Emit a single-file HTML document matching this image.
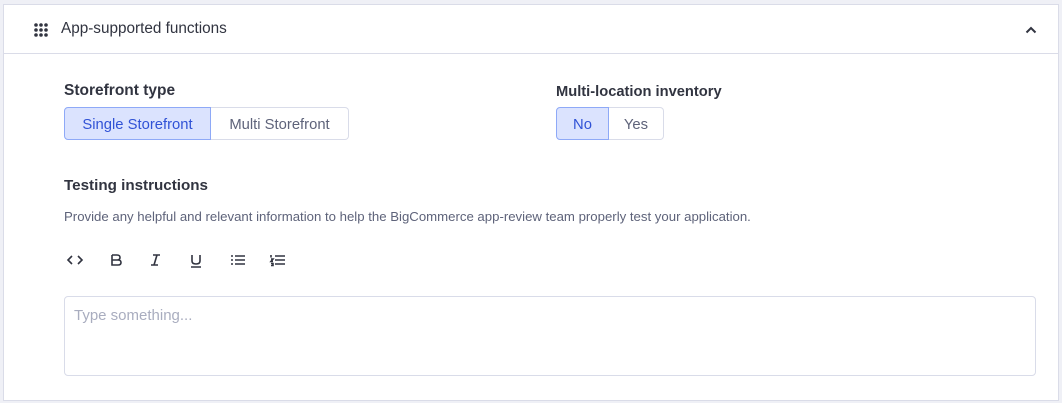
<!DOCTYPE html>
<html><head><style>
*{box-sizing:border-box;margin:0;padding:0}
body{width:1062px;height:403px;background:#eff0f6;font-family:"Liberation Sans",sans-serif;position:relative;overflow:hidden;color:#313440}
.panel{position:absolute;left:3px;top:4px;width:1056px;height:397px;background:#fff;border:1px solid #dadce8}
.hdr{position:absolute;left:0;top:0;width:100%;height:49px;border-bottom:1px solid #dadce8}
.abs{position:absolute;white-space:nowrap}
.lbl{font-weight:bold;font-size:14.7px;color:#313440}
.seg{position:absolute;display:flex;height:33px;top:102px}
.seg div{border:1px solid #d9dce9;font-size:14.8px;color:#5e637a;display:flex;align-items:center;justify-content:center;height:33px;padding-top:2px}
.seg .on{background:#dbe3fe;border-color:#8ea9f7;color:#3052d6}
.seg div:first-child{border-radius:4px 0 0 4px}
.seg div:last-child{border-radius:0 4px 4px 0;border-left:none}
</style></head><body>
<div class="panel">
 <div class="hdr">
  <svg class="abs" style="left:30px;top:18px" width="14" height="14" viewBox="0 0 14 14" fill="#313440">
   <circle cx="2" cy="2" r="1.8"/><circle cx="7" cy="2" r="1.8"/><circle cx="12" cy="2" r="1.8"/>
   <circle cx="2" cy="7" r="1.8"/><circle cx="7" cy="7" r="1.8"/><circle cx="12" cy="7" r="1.8"/>
   <circle cx="2" cy="12" r="1.8"/><circle cx="7" cy="12" r="1.8"/><circle cx="12" cy="12" r="1.8"/>
  </svg>
  <div class="abs" style="left:57px;top:15px;font-size:15.3px;color:#313440">App-supported functions</div>
  <svg class="abs" style="left:1021px;top:21px" width="12" height="8" viewBox="0 0 12 8"><path d="M1.5 6.5 L6 2 L10.5 6.5" stroke="#313440" stroke-width="2" fill="none"/></svg>
 </div>
 <div class="abs lbl" style="left:60px;top:77px;font-size:15.5px">Storefront type</div>
 <div class="seg" style="left:60px"><div class="on" style="width:147px">Single Storefront</div><div style="width:138px">Multi Storefront</div></div>
 <div class="abs lbl" style="left:552px;top:79px">Multi-location inventory</div>
 <div class="seg" style="left:552px"><div class="on" style="width:53px">No</div><div style="width:55px">Yes</div></div>
 <div class="abs lbl" style="left:60px;top:172px;font-size:15.2px">Testing instructions</div>
 <div class="abs" style="left:60px;top:204px;font-size:13.2px;color:#5e637a">Provide any helpful and relevant information to help the BigCommerce app-review team properly test your application.</div>
 <svg class="abs" style="left:60px;top:247px" width="230" height="16" viewBox="0 0 230 16" fill="none" stroke="#313440" stroke-width="1.6">
  <path d="M8 4 L4 8 L8 12 M14 4 L18 8 L14 12"/>
  <path d="M48 3 H53 Q56 3 56 5.5 Q56 8 53 8 H48 M48 8 H54 Q57 8 57 10.5 Q57 13 54 13 H48 V3"/>
  <path d="M89 3 H96 M87 13 H94 M93 3 L90 13"/>
  <path d="M128 3 V9 Q128 12 132 12 Q136 12 136 9 V3 M127 15 H137"/>
  <path d="M171 4 H181 M171 8 H181 M171 12 H181 M167 4 H169 M167 8 H169 M167 12 H169"/>
  <path d="M211 4 H221 M211 8 H221 M211 12 H221 M207 3 V5.5 M207 7 H209 L207 9.5 H209 M207 11.5 H209 V13.5 H207"/>
 </svg>
 <div class="abs" style="left:60px;top:291px;width:972px;height:80px;border:1px solid #d9dce9;border-radius:4px"></div>
 <div class="abs" style="left:70px;top:302px;font-size:15px;color:#a9adbf">Type something...</div>
</div>
</body></html>
